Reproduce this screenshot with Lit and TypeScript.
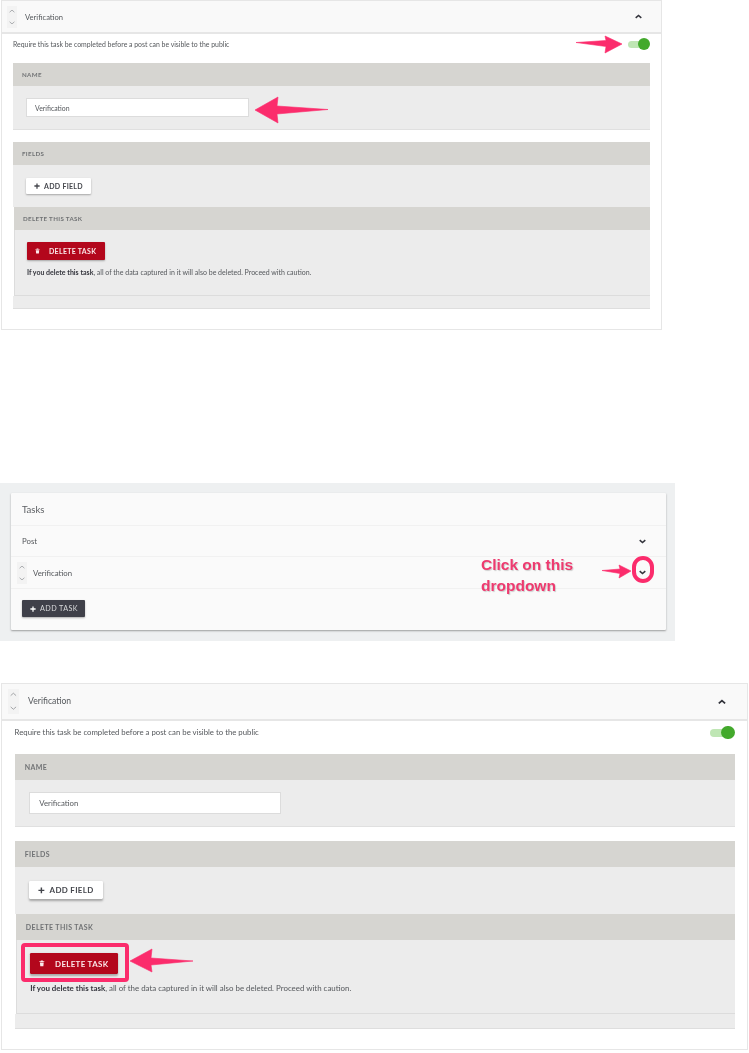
import { LitElement, css, html, svg } from "lit";
import { customElement, property } from "lit/decorators.js";

const chevron = (up: boolean) => html`<svg class="chev" viewBox="0 0 10 6" width="7" height="5">
  <path d=${up ? "M1 5 L5 1.5 L9 5" : "M1 1 L5 4.5 L9 1"} fill="none" stroke="currentColor" stroke-width="2.2"/>
</svg>`;

const plus = html`<svg viewBox="0 0 8 8" width="6" height="6"><path d="M4 .5v7M.5 4h7" stroke="currentColor" stroke-width="1.7"/></svg>`;

const sorter = html`<div class="sorter">
  <svg viewBox="0 0 10 6" width="6" height="4"><path d="M1 5 L5 1.5 L9 5" fill="none" stroke="currentColor" stroke-width="1.2"/></svg>
  <svg viewBox="0 0 10 6" width="6" height="4"><path d="M1 1 L5 4.5 L9 1" fill="none" stroke="currentColor" stroke-width="1.2"/></svg>
</div>`;

const base = css`
  :host, * { box-sizing: border-box; }
  .chev { color: #33343c; display: block; }
  .sorter {
    display: flex; flex-direction: column; align-items: center; justify-content: space-between;
    background: #f3f3f3; color: #8f9296; padding: 3px 0;
  }
  .btn {
    display: inline-flex; align-items: center; font-weight: 700;
    border-radius: 1px; box-shadow: 0 1px 2px rgba(0,0,0,.3);
  }
`;

@customElement("task-panel")
export class TaskPanel extends LitElement {
  @property({ type: Boolean, reflect: true }) large = false;

  static styles = [base, css`
    :host {
      display: block; font-family: Lato, "Open Sans", sans-serif; color: #55585c; font-size: 6.9px;
      background: #fff; border: 1px solid #e6e6e6; padding-bottom: 20px;
    }
    :host([large]) { zoom: 1.13; padding-bottom: 18px; }
    :host([large]) .name { padding: 11px 13px; }
    :host([large]) .fields { height: 41.8px; }
    :host([large]) .del p { margin-top: 8px; }
    .head {
      height: 33px; display: flex; align-items: center; padding: 0 19px 0 5px; background: #f9f9f9;
      border-bottom: 2px solid #e6e6e6; font-size: 7.6px; gap: 8px;
    }
    .head .sorter { width: 10px; height: 22px; }
    .head .title { flex: 1; }
    .req { height: 29px; display: flex; justify-content: space-between; align-items: flex-start; padding: 5px 11px 0 11px; }
    .req span { line-height: 10px; }
    .toggle { width: 22px; height: 10px; position: relative; }
    .toggle::before { content: ""; position: absolute; left: 0; right: 4px; top: 2px; height: 7px; border-radius: 4px; background: #bfe6b4; }
    .toggle::after { content: ""; position: absolute; right: 0; top: -1px; width: 12px; height: 12px; border-radius: 50%; background: #43a92c; }
    .sections { margin: 0 11px; display: flex; flex-direction: column; gap: 12px; }
    .label {
      height: 23px; background: #d6d5d1; display: flex; align-items: center; padding-left: 9px;
      font-size: 6.2px; font-weight: 700; letter-spacing: .35px; color: #707274;
    }
    .body { background: #ececec; }
    .name { padding: 12px 13px; border-bottom: 1px solid #e0e0e0; }
    .input {
      width: 223px; height: 19px; background: #fff; border: 1px solid #dcdcdc; display: flex;
      align-items: center; padding-left: 8px;
    }
    .fields { padding: 13px; height: 42px; }
    .add { height: 16px; width: 65px; padding-left: 8px; gap: 4px; background: #fff; color: #44464c; font-size: 7px; letter-spacing: .3px; }
    .del-label { margin-left: 1px; }
    .del {
      height: 66px; margin-left: 1px; padding: 12px 12px 0; border: solid #dcdcdc; border-width: 0 0 1px 1px;
    }
    .danger { height: 18px; width: 78px; padding-left: 8px; gap: 9px; background: #b3071c; color: #fbe9ea; font-size: 7px; letter-spacing: .3px; }
    .del p { margin: 7px 0 0; line-height: 10px; font-size: 7px; }
    .del b { color: #33343c; }
    .strip { height: 13px; background: #ececec; border-bottom: 1px solid #dedede; }
    .tail { display: flex; flex-direction: column; }
  `];

  render() {
    return html`
      <div class="head">
        ${sorter}
        <span class="title">Verification</span>
        ${chevron(true)}
      </div>
      <div class="req">
        <span>Require this task be completed before a post can be visible to the public</span>
        <div class="toggle"></div>
      </div>
      <div class="sections">
        <div>
          <div class="label">NAME</div>
          <div class="body name"><div class="input">Verification</div></div>
        </div>
        <div class="tail">
          <div class="label">FIELDS</div>
          <div class="body fields"><div class="btn add">${plus}ADD FIELD</div></div>
          <div class="label del-label">DELETE THIS TASK</div>
          <div class="body del">
            <div class="btn danger">
              <svg viewBox="0 0 8 9" width="5" height="6"><path d="M.5 1.5h7v1h-7zM2.5.5h3v1h-3zM1.3 3.2h5.4L6.2 8.5H1.8z" fill="currentColor"/></svg>
              DELETE TASK
            </div>
            <p><b>If you delete this task</b>, all of the data captured in it will also be deleted. Proceed with caution.</p>
          </div>
          <div class="strip"></div>
        </div>
      </div>
    `;
  }
}

@customElement("tasks-card")
export class TasksCard extends LitElement {
  static styles = [base, css`
    :host {
      display: block; width: 675px; height: 158px; padding: 10px 9px 11px 11px; background: #eef0f1;
      font-family: Lato, "Open Sans", sans-serif; color: #55585c;
    }
    .card { background: #fafafa; height: 137px; box-shadow: 0 1px 2px rgba(0,0,0,.35); border-radius: 1px; }
    .row { display: flex; align-items: center; border-bottom: 1px solid #f1f1f1; font-size: 7.8px; padding: 0 20px 0 11px; height: 31px; justify-content: space-between; }
    .row.first { height: 33px; font-size: 9.6px; color: #5c5f63; }
    .row.sort { height: 32px; justify-content: flex-start; padding-left: 6px; gap: 6px; }
    .row.sort .chev { margin-left: auto; }
    .sorter { width: 10px; height: 22px; }
    .foot { display: flex; padding: 11px; }
    .add { height: 17px; width: 63px; padding-left: 8px; gap: 4px; background: #3f4049; color: #d8d9db; font-size: 7.2px; font-weight: 400; letter-spacing: .4px; }
    .add svg { color: #fff; }
  `];

  render() {
    return html`<div class="card">
      <div class="row first">Tasks</div>
      <div class="row">Post ${chevron(false)}</div>
      <div class="row sort">${sorter}<span>Verification</span>${chevron(false)}</div>
      <div class="foot"><div class="btn add">${plus}ADD TASK</div></div>
    </div>`;
  }
}

// pink callouts drawn over the screenshots
const arrows = svg`
  <g fill="#fb2c6c" stroke="#fb2c6c" stroke-width=".6" stroke-linejoin="round">
    <path d="M576 42.5 L606 40.5 L605 36 L622 44 L605 53 L606 46.5 Z"/>
    <path d="M255 110 L278 97 L277 106 L328 109.5 L277 114 L278 123 Z"/>
    <path d="M602 570.5 L620 569 L619 565 L631 571 L619 578 L620 573.5 Z"/>
    <path d="M130 961 L152 949 L151 958 L193 961 L151 965 L152 972 Z"/>
  </g>
  <rect x="634" y="558" width="18" height="23" rx="9" fill="none" stroke="#fb2c6c" stroke-width="4"/>
  <rect x="23" y="945" width="104" height="35" rx="2" fill="none" stroke="#fb2c6c" stroke-width="4"/>
`;

@customElement("app-root")
export class AppRoot extends LitElement {
  static styles = css`
    :host { display: block; position: relative; width: 749px; height: 1053px; background: #fff; overflow: hidden; filter: blur(.35px); }
    .first { margin: 0 0 0 1px; width: 661px; }
    tasks-card { margin-top: 153px; }
    .third { margin: 37px 0 0 1px; width: 661px; }
    .marks { position: absolute; left: 0; top: 0; }
    .note {
      position: absolute; left: 481px; top: 554px; width: 120px; font: 700 15.5px/21px "Liberation Sans", Arial, sans-serif;
      color: #ee3a6f; text-shadow: 1px 1px 1px rgba(0,0,0,.18);
    }
  `;

  render() {
    return html`
      <task-panel class="first"></task-panel>
      <tasks-card></tasks-card>
      <task-panel class="third" large></task-panel>
      <svg class="marks" width="749" height="1053" viewBox="0 0 749 1053">${arrows}</svg>
      <div class="note">Click on this dropdown</div>
    `;
  }
}
